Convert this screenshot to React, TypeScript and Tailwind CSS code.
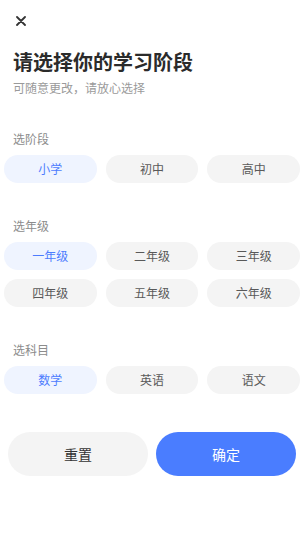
import { useState } from 'react';

const stages = ['小学', '初中', '高中'];
const grades = ['一年级', '二年级', '三年级', '四年级', '五年级', '六年级'];
const subjects = ['数学', '英语', '语文'];

function Section({
  label,
  items,
  value,
  onPick,
  className,
}: {
  label: string;
  items: string[];
  value: string;
  onPick: (v: string) => void;
  className?: string;
}) {
  return (
    <div className={className}>
      <div className="px-[9px] text-[12px] leading-4 text-[#8c8c8c]">{label}</div>
      <div className="mt-2 grid grid-cols-3 gap-x-[9px] gap-y-[9px]">
        {items.map((item) => {
          const active = item === value;
          return (
            <button
              key={item}
              onClick={() => onPick(item)}
              className={`h-[28px] rounded-full text-[12px] ${
                active ? 'bg-[#eff4ff] text-[#4d7cfe]' : 'bg-[#f4f4f4] text-[#595959]'
              }`}
            >
              {item}
            </button>
          );
        })}
      </div>
    </div>
  );
}

export default function App() {
  const [stage, setStage] = useState('小学');
  const [grade, setGrade] = useState('一年级');
  const [subject, setSubject] = useState('数学');

  return (
    <div
      className="w-[304px] h-[540px] bg-white"
      style={{ fontFamily: '"Noto Sans CJK SC", "Noto Sans", sans-serif' }}
    >
      <div className="pl-4 pt-4">
        <svg width="10" height="10" viewBox="0 0 10 10" fill="none">
          <path d="M1 1L9 9M9 1L1 9" stroke="#333333" strokeWidth="1.8" strokeLinecap="round" />
        </svg>
      </div>

      <div className="px-[13px]">
        <h1 className="mt-[22px] text-[20px] leading-7 font-bold text-[#2b2b2b]">请选择你的学习阶段</h1>
        <p className="mt-1 text-[12px] leading-4 text-[#9a9a9a]">可随意更改，请放心选择</p>
      </div>

      <div className="px-1">
        <Section className="mt-[35px]" label="选阶段" items={stages} value={stage} onPick={setStage} />
        <Section className="mt-[35px]" label="选年级" items={grades} value={grade} onPick={setGrade} />
        <Section className="mt-[35px]" label="选科目" items={subjects} value={subject} onPick={setSubject} />
      </div>

      <div className="mt-[38px] flex gap-2 px-2">
        <button
          onClick={() => {
            setStage('小学');
            setGrade('一年级');
            setSubject('数学');
          }}
          className="h-[44px] flex-1 rounded-full bg-[#f4f4f4] text-[14px] text-[#333333]"
        >
          重置
        </button>
        <button className="h-[44px] flex-1 rounded-full bg-[#4a7dff] text-[14px] text-white">确定</button>
      </div>
    </div>
  );
}
